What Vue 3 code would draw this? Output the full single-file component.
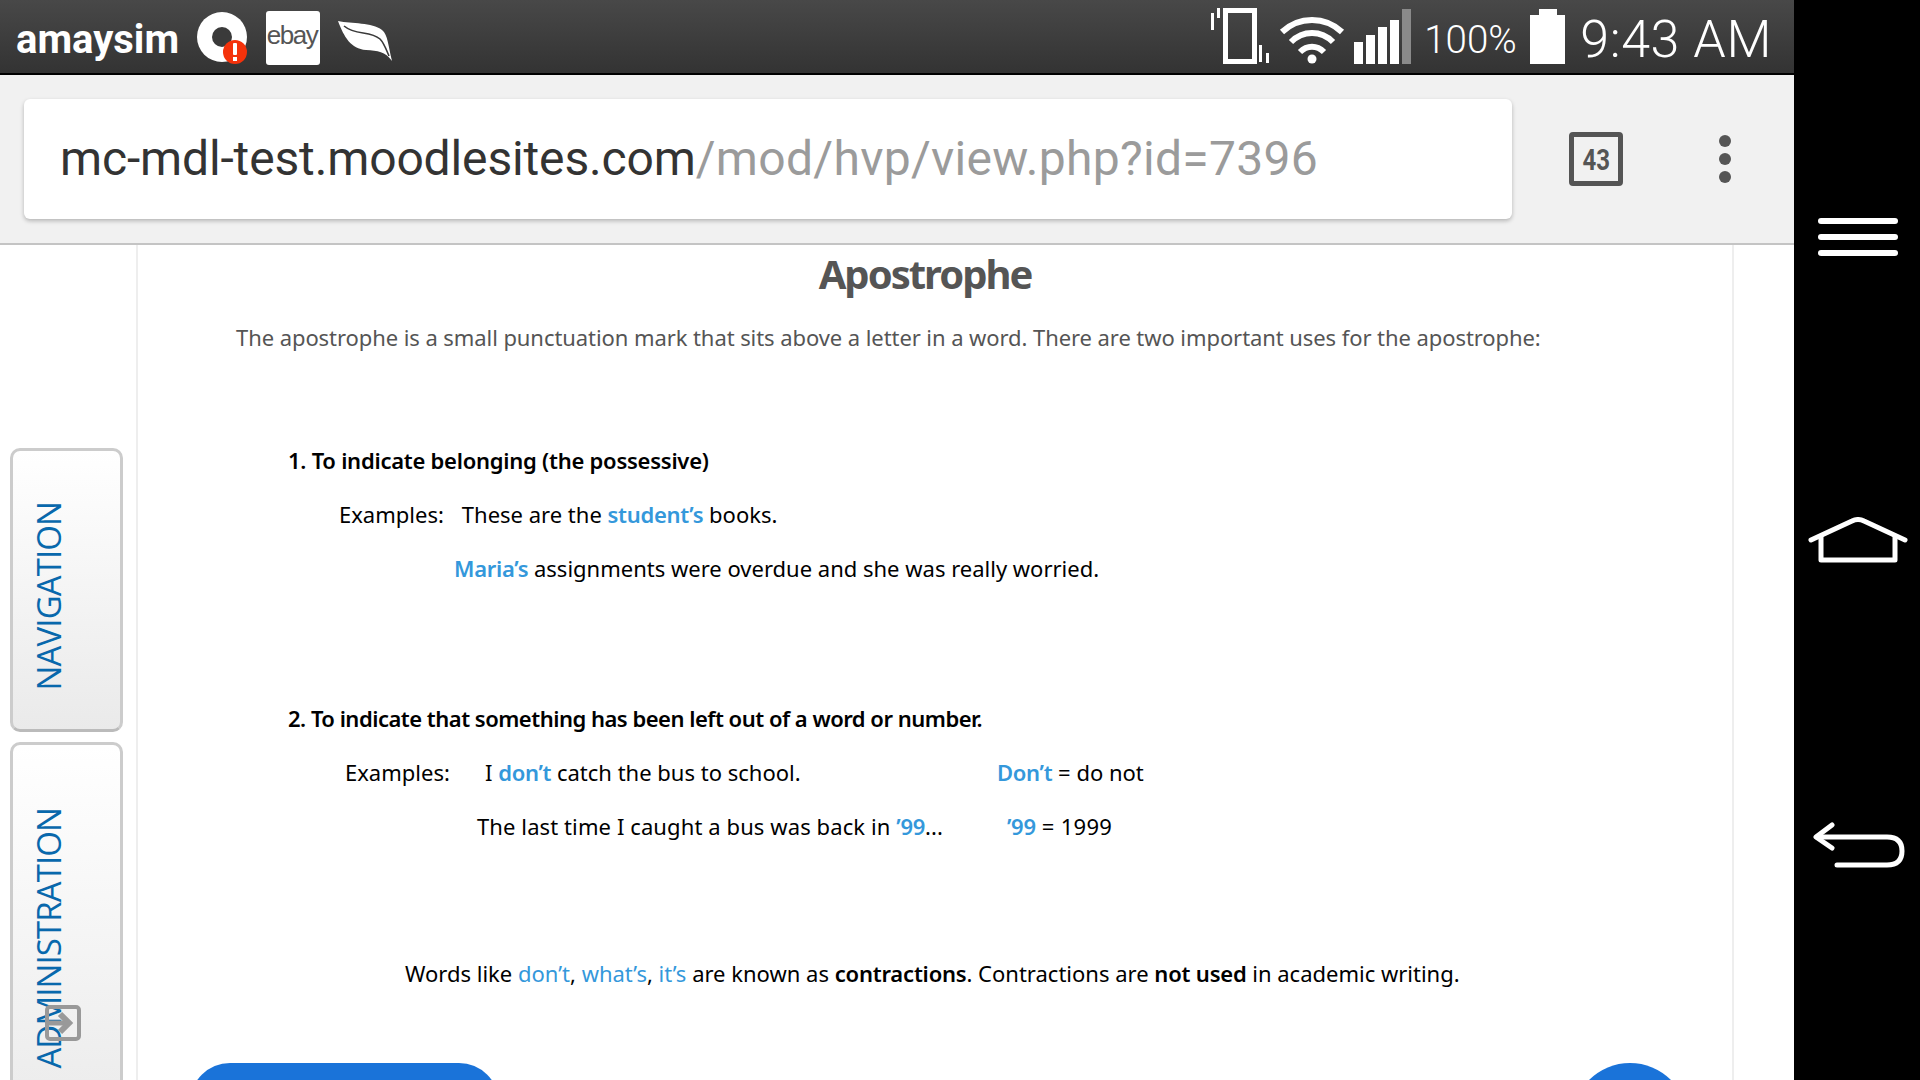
<script setup>
const barHeights = [22, 29, 37, 44]
</script>

<template>
  <div class="screen">
    <div class="device">
      <header class="status">
        <div class="status-left">
          <span class="carrier">amaysim</span>
          <svg class="ic-disc" width="58" height="58" viewBox="0 0 58 58">
            <circle cx="26" cy="25" r="25" fill="#fff" />
            <circle cx="26" cy="25" r="10" fill="#3a3a3a" />
            <circle cx="39" cy="40" r="12" fill="#f4320b" />
            <rect x="37" y="31" width="4" height="12" rx="1" fill="#fff" />
            <rect x="37" y="45" width="4" height="4" fill="#fff" />
          </svg>
          <div class="ebay"><span>ebay</span></div>
          <svg class="ic-leaf" width="54" height="40" viewBox="0 0 54 40">
            <path d="M0 0C14 3 34 1 44 9C50 14 50 24 54 40C47 30 40 30 28 29C13 28 6 16 0 0Z" fill="#fff" />
            <path d="M6 5C18 15 32 9 42 18C46 22 48 28 51 35" fill="none" stroke="#3a3a3a" stroke-width="1.6" />
          </svg>
        </div>
        <div class="status-right">
          <svg class="ic-vibrate" width="60" height="56" viewBox="0 0 60 56">
            <rect x="14.500" y="2.500" width="29" height="51" fill="none" stroke="#fff" stroke-width="5" />
            <rect x="0" y="5" width="3" height="17" fill="#fff" />
            <rect x="6" y="0" width="3" height="10" fill="#fff" />
            <rect x="48" y="37" width="3" height="17" fill="#fff" />
            <rect x="55" y="45" width="3" height="10" fill="#fff" />
          </svg>
          <svg class="ic-wifi" width="66" height="48" viewBox="0 0 66 48">
            <path d="M3 16C20 0 46 0 63 16" fill="none" stroke="#fff" stroke-width="6" />
            <path d="M12 26C24 14 42 14 54 26" fill="none" stroke="#fff" stroke-width="6" />
            <path d="M21 36C28 29 38 29 45 36" fill="none" stroke="#fff" stroke-width="6" />
            <circle cx="33" cy="43" r="4.500" fill="#fff" />
          </svg>
          <div class="signal">
            <i v-for="h in barHeights" :key="h" :style="{ height: h + 'px' }"></i>
            <i class="dim"></i>
          </div>
          <span class="pct">100%</span>
          <svg class="ic-battery" width="35" height="55" viewBox="0 0 35 55">
            <path d="M9 0H27V6H35V55H0V6H9Z" fill="#fff" />
          </svg>
          <span class="clock">9:43 AM</span>
        </div>
      </header>

      <div class="toolbar">
        <div class="url-card">
          <span class="host">mc-mdl-test.moodlesites.com</span><span class="path">/mod/hvp/view.php?id=7396</span>
        </div>
        <div class="tabs-count"><span>43</span></div>
        <div class="kebab"><i></i><i></i><i></i></div>
      </div>

      <div class="page">
        <aside class="gutter">
          <div class="side-tab nav-tab"><span>NAVIGATION</span></div>
          <div class="side-tab admin-tab"><span>ADMINISTRATION</span></div>
          <svg class="dock" width="36" height="36" viewBox="0 0 36 36">
            <rect x="2" y="2" width="32" height="32" rx="3" fill="none" stroke="#999" stroke-width="4" />
            <path d="M15 9L24 18L15 27" fill="none" stroke="#999" stroke-width="6" />
            <path d="M4 18H20" stroke="#999" stroke-width="5" />
          </svg>
        </aside>

        <main class="panel">
          <h1 class="title">Apostrophe</h1>
          <p class="intro">The apostrophe is a small punctuation mark that sits above a letter in a word. There are two important uses for the apostrophe:</p>

          <h2 class="head head-one">1. To indicate belonging (the possessive)</h2>
          <p class="line ex-one">Examples:<span class="gap-a">These are the</span> <b class="hl">student’s</b> books.</p>
          <p class="line maria"><b class="hl">Maria’s</b> assignments were overdue and she was really worried.</p>

          <h2 class="head head-two">2. To indicate that something has been left out of a word or number.</h2>
          <p class="line row ex-two">
            <span class="c-label">Examples:</span>
            <span class="c-text">I <b class="hl">don’t</b> catch the bus to school.</span>
            <span class="c-note"><b class="hl">Don’t</b> = do not</span>
          </p>
          <p class="line row ex-three">
            <span class="c-text2">The last time I caught a bus was back in <b class="hl">’99</b>...</span>
            <span class="c-note2"><b class="hl">’99</b> = 1999</span>
          </p>

          <p class="line closing">Words like <span class="lk">don’t</span>, <span class="lk">what’s</span>, <span class="lk">it’s</span> are known as <b>contractions</b>. Contractions are <b>not used</b> in academic writing.</p>

          <div class="actions">
            <div class="pill"></div>
            <div class="round"></div>
          </div>
        </main>
      </div>
    </div>

    <nav class="softkeys">
      <svg class="key-menu" width="80" height="38" viewBox="0 0 80 38">
        <rect x="0" y="0" width="80" height="6" rx="3" fill="#fff" />
        <rect x="0" y="16" width="80" height="6" rx="3" fill="#fff" />
        <rect x="0" y="32" width="80" height="6" rx="3" fill="#fff" />
      </svg>
      <svg class="key-home" width="100" height="46" viewBox="0 0 100 46">
        <path d="M3 23L44 4Q50 1 56 4L97 23" fill="none" stroke="#fff" stroke-width="5" stroke-linecap="round" />
        <path d="M13 19V43H87V19" fill="none" stroke="#fff" stroke-width="5" stroke-linejoin="round" />
      </svg>
      <svg class="key-back" width="92" height="46" viewBox="0 0 92 46">
        <path d="M19 3L3 15L19 26" fill="none" stroke="#fff" stroke-width="5" stroke-linecap="round" stroke-linejoin="round" />
        <path d="M4 15H74Q89 15 89 29Q89 43 74 43H24" fill="none" stroke="#fff" stroke-width="5" stroke-linecap="round" />
      </svg>
    </nav>
  </div>
</template>

<style scoped>
.screen { width: 1920px; height: 1080px; display: flex; overflow: hidden; background: #000; font-family: "Noto Sans", sans-serif; }
.device { width: 1794px; height: 1080px; display: flex; flex-direction: column; background: #fff; }

.status { height: 73px; border-bottom: 2px solid #000; flex: none; display: flex; justify-content: space-between; background: linear-gradient(#484848, #333); color: #fff; font-family: Roboto, sans-serif; }
.status-left { display: flex; align-items: flex-start; padding-left: 16px; }
.carrier { font-size: 40px; font-weight: 700; line-height: 73px; width: 180px; margin-top: 3px; white-space: nowrap; }
.ic-disc { margin: 12px 0 0 0; }
.ebay { width: 54px; height: 54px; margin: 11px 0 0 12px; background: #fff; border-radius: 3px; display: flex; align-items: center; justify-content: center; font-family: "Liberation Sans", sans-serif; font-size: 26px; letter-spacing: -1.500px; color: #555; }
.ebay span { margin-top: -6px; margin-left: -2px; }
.ic-leaf { margin: 21px 0 0 18px; }
.status-right { display: flex; align-items: flex-start; padding-right: 22px; }
.ic-vibrate { margin: 8px 0 0 0; }
.ic-wifi { margin: 16px 0 0 8px; }
.signal { display: flex; gap: 3px; align-items: flex-end; height: 55px; margin: 9px 0 0 9px; }
.signal i { width: 9px; background: #fff; display: block; }
.signal i.dim { height: 55px; background: #8a8a8a; }
.pct { font-size: 38.500px; font-weight: 300; line-height: 38px; margin: 21px 0 0 13px; width: 91px; white-space: nowrap; }
.ic-battery { margin: 9px 0 0 15px; }
.clock { font-size: 52px; font-weight: 300; line-height: 52px; margin: 14px 0 0 15px; letter-spacing: 0.6px; white-space: nowrap; }

.toolbar { height: 170px; flex: none; box-sizing: border-box; border-bottom: 2px solid #c4c4c4; background: #f1f1f1; display: flex; align-items: flex-start; }
.url-card { width: 1488px; height: 120px; margin: 24px 0 0 24px; padding-left: 36px; box-sizing: border-box; background: #fff; border-radius: 6px; box-shadow: 0 2px 4px rgba(0,0,0,.25); font-family: Roboto, sans-serif; font-size: 48px; line-height: 120px; white-space: nowrap; }
.host { color: #333; letter-spacing: -0.14px; }
.path { color: #9b9b9b; letter-spacing: 0.3px; }
.tabs-count { width: 54px; height: 54px; box-sizing: border-box; margin: 57px 0 0 57px; border: 5px solid #555; border-radius: 4px; display: flex; align-items: center; justify-content: center; font-family: Roboto, sans-serif; font-weight: 700; font-size: 30px; color: #555; }
.tabs-count span { transform: scaleX(.8); }
.kebab { margin: 60px 0 0 96px; display: flex; flex-direction: column; gap: 6px; }
.kebab i { display: block; width: 12px; height: 12px; border-radius: 50%; background: #555; }

.page { flex: 1; min-height: 0; display: flex; }
.gutter { width: 136px; flex: none; position: relative; padding: 203px 0 0 10px; box-sizing: border-box; }
.side-tab { width: 113px; box-sizing: border-box; border: 3px solid #ccc; border-radius: 10px; background: linear-gradient(#fff, #eaeaea); display: flex; justify-content: center; font-family: "Open Sans", sans-serif; color: #0868ac; }
.side-tab span { writing-mode: vertical-rl; transform: rotate(180deg); font-size: 33px; line-height: 36px; letter-spacing: -0.9px; white-space: nowrap; margin-left: -36px; }
.nav-tab { height: 284px; align-items: center; padding-top: 12px; border-bottom-color: #bbb; }
.admin-tab { height: 400px; margin-top: 10px; align-items: flex-start; }
.admin-tab span { margin-top: 63px; }
.dock { position: absolute; left: 45px; top: 760px; }

.panel { width: 1598px; flex: none; box-sizing: border-box; border-left: 2px solid #eee; border-right: 2px solid #eee; color: #000; font-size: 22px; }
.title { margin: 0; height: 58px; line-height: 57px; font-size: 40px; font-weight: 700; color: #555; text-align: center; letter-spacing: -2px; transform: translateX(-10px); }
.intro { margin: 7px 0 0 98px; line-height: 54px; height: 54px; color: #555; white-space: nowrap; letter-spacing: -0.075px; }
.head { margin: 0; padding-left: 150px; font-size: 22px; font-weight: 600; line-height: 54px; height: 54px; white-space: nowrap; }
.head-one { margin-top: 69px; letter-spacing: -0.25px; }
.head-two { margin-top: 96px; letter-spacing: -0.5px; }
.line { margin: 0; line-height: 54px; height: 54px; white-space: nowrap; }
.ex-one { padding-left: 201px; }
.gap-a { margin-left: 18px; }
.maria { padding-left: 316px; }
.hl { color: #3498db; font-weight: 600; letter-spacing: -0.3px; }
.lk { color: #3498db; }
.row { display: flex; }
.ex-two { padding-left: 207px; }
.c-label { width: 140px; flex: none; }
.c-text { width: 512px; flex: none; }
.c-note { flex: none; }
.ex-three { padding-left: 339px; letter-spacing: 0.1px; }
.c-text2 { width: 530px; flex: none; }
.c-note2 { flex: none; letter-spacing: 0.3px; }
.closing { margin-top: 93px; padding-left: 267px; }
.closing b { font-weight: 600; letter-spacing: -0.2px; }
.actions { margin-top: 63px; padding-left: 52px; display: flex; justify-content: space-between; padding-right: 44px; }
.pill { width: 309px; height: 116px; border-radius: 40px; background: #1a73d9; }
.round { width: 116px; height: 116px; border-radius: 50%; background: #1a73d9; }

.softkeys { width: 126px; flex: none; background: #000; position: relative; }
.key-menu { position: absolute; left: 24px; top: 218px; }
.key-home { position: absolute; left: 14px; top: 517px; }
.key-back { position: absolute; left: 19px; top: 822px; }
</style>
